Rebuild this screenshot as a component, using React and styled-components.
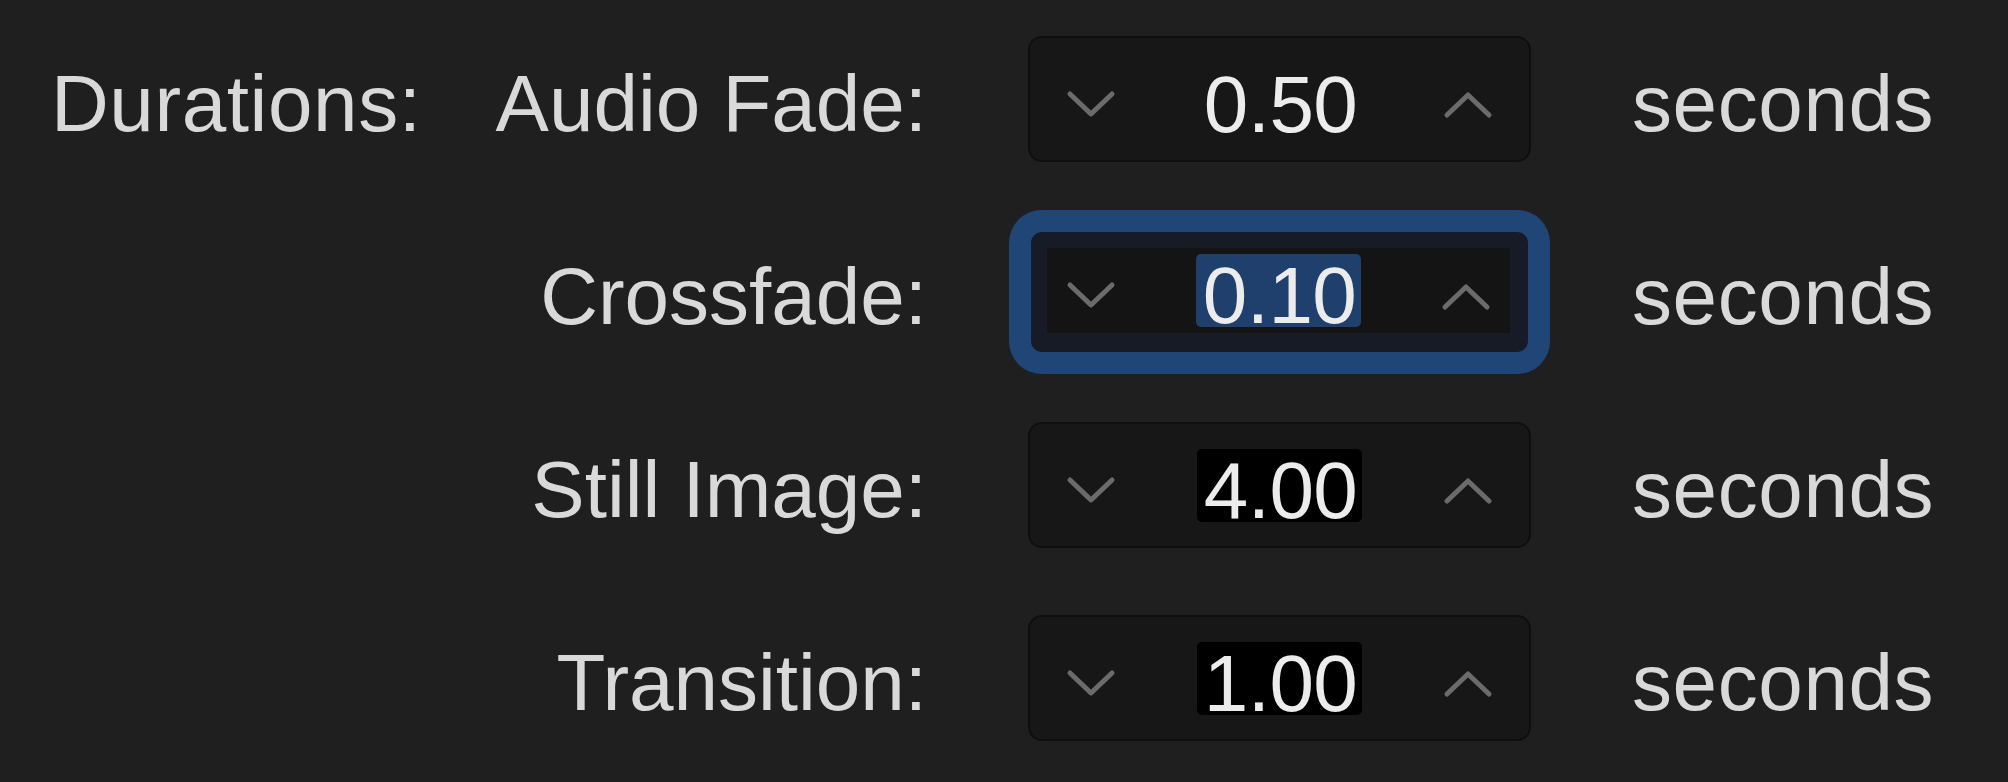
import React from 'react';
import styled, { createGlobalStyle, css } from 'styled-components';

const GlobalStyle = createGlobalStyle`
  html, body {
    margin: 0;
    padding: 0;
    background: #1f1f1f;
  }
  body {
    font-family: "Liberation Sans", Arial, sans-serif;
    color: #d9d9d9;
  }
`;

// --- Layout ---
const Page = styled.div`
  width: 2008px;
  height: 782px;
  box-sizing: border-box;
  padding: 36px 0 0 51px;
  display: flex;
  gap: 74px;
  background: #1f1f1f;
`;

const SectionTitle = styled.div`
  height: 126px;
  box-sizing: border-box;
  padding-top: 9px;
  display: flex;
  align-items: center;
  font-size: 80px;
  letter-spacing: 0.6px;
  white-space: nowrap;
`;

const FieldsGrid = styled.div`
  display: grid;
  grid-template-columns: auto 503px auto;
  grid-auto-rows: 126px;
  column-gap: 101px;
  row-gap: 67px;
`;

const Label = styled.div`
  box-sizing: border-box;
  padding-top: 9px;
  display: flex;
  align-items: center;
  justify-content: flex-end;
  font-size: 80px;
  white-space: nowrap;
`;

const Unit = styled(Label)`
  justify-content: flex-start;
  letter-spacing: 0.6px;
`;

// --- Stepper ---
const Stepper = styled.div`
  box-sizing: border-box;
  height: 126px;
  border-radius: 14px;
  background: #171717;
  border: 2px solid #0f0f0f;
  display: flex;
  align-items: stretch;
  ${(p) =>
    p.$focused &&
    css`
      background: #161b25;
      border: 3px solid #1f4677;
      box-shadow: 0 0 0 19px #1f4677;
      padding: 16px 18px 19px 16px;
    `}
`;

const Field = styled.div`
  flex: 1;
  display: flex;
  align-items: center;
  justify-content: space-between;
  padding: 0 ${(p) => (p.$focused ? '19px' : '36px')};
  background: ${(p) => (p.$focused ? '#141414' : 'transparent')};
`;

const Chevron = styled.svg`
  width: 50px;
  height: 28px;
  display: block;
  margin-top: ${(p) => (p.$up ? '12px' : '9px')};
`;

const Value = styled.span`
  display: inline-block;
  height: 73px;
  line-height: 83px;
  padding: 0 5px 0 7px;
  border-radius: 5px;
  font-size: 80px;
  letter-spacing: -0.5px;
  color: #ececec;
  background: ${(p) =>
    p.$mode === 'selected' ? '#1f3f6d' : p.$mode === 'dark' ? '#000000' : 'transparent'};
`;

const ChevronDown = () => (
  <Chevron viewBox="0 0 50 28">
    <path d="M4 4 L25 24 L46 4" fill="none" stroke="#6b6b6b" strokeWidth="5" strokeLinecap="round" strokeLinejoin="round" />
  </Chevron>
);

const ChevronUp = () => (
  <Chevron $up viewBox="0 0 50 28">
    <path d="M4 24 L25 4 L46 24" fill="none" stroke="#6b6b6b" strokeWidth="5" strokeLinecap="round" strokeLinejoin="round" />
  </Chevron>
);

const rows = [
  { label: 'Audio Fade:', value: '0.50', mode: 'plain' },
  { label: 'Crossfade:', value: '0.10', mode: 'selected', focused: true },
  { label: 'Still Image:', value: '4.00', mode: 'dark' },
  { label: 'Transition:', value: '1.00', mode: 'dark' },
];

export default function App() {
  return (
    <>
      <GlobalStyle />
      <Page>
        <SectionTitle>Durations:</SectionTitle>
        <FieldsGrid>
          {rows.map((r) => (
            <React.Fragment key={r.label}>
              <Label>{r.label}</Label>
              <Stepper $focused={r.focused}>
                <Field $focused={r.focused}>
                  <ChevronDown />
                  <Value $mode={r.mode}>{r.value}</Value>
                  <ChevronUp />
                </Field>
              </Stepper>
              <Unit>seconds</Unit>
            </React.Fragment>
          ))}
        </FieldsGrid>
      </Page>
    </>
  );
}
